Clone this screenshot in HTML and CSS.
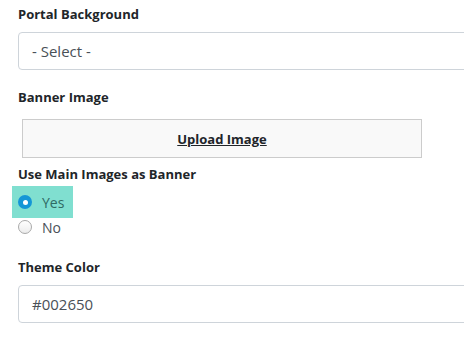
FILE: index.html
```html
<!DOCTYPE html>
<html lang="en">
<head>
  <meta charset="UTF-8" />
  <meta name="viewport" content="width=device-width, initial-scale=1.0"/>
  <title>Portal Settings</title>
  <link rel="stylesheet" href="styles.css">
</head>
<body>

<div class="settings">
  <div class="field">
    <label class="field-label">Portal Background</label>
    <div class="select-box">- Select -</div>
  </div>

  <div class="field field-banner">
    <label class="field-label">Banner Image</label>
    <div class="upload-box"><span class="upload-link">Upload Image</span></div>
  </div>

  <div class="field field-radio">
    <label class="field-label">Use Main Images as Banner</label>
    <div class="radio-row radio-active">
      <span class="radio radio-checked"></span>
      <span class="radio-text">Yes</span>
    </div>
    <div class="radio-row">
      <span class="radio"></span>
      <span class="radio-text">No</span>
    </div>
  </div>

  <div class="field field-theme">
    <label class="field-label">Theme Color</label>
    <div class="text-box">#002650</div>
  </div>
</div>

</body>
</html>
```

FILE: styles.css
```css
* {
  box-sizing: border-box;
  font-family: 'Open Sans', 'Noto Sans', Arial, sans-serif;
}

body {
  margin: 0;
  padding: 0;
  background: #ffffff;
  overflow: hidden;
  color: #212529;
}

.settings {
  padding: 4px 0 0 18px;
  width: 500px;
}

.field-label {
  display: block;
  font-size: 13px;
  font-weight: 700;
  line-height: 20px;
  color: #212529;
  margin-bottom: 8px;
}

.select-box,
.text-box {
  height: 38px;
  width: 470px;
  border: 1px solid #ced4da;
  border-radius: 4px;
  padding: 0 13px;
  font-size: 15px;
  line-height: 36px;
  color: #495057;
}

.field-banner {
  margin-top: 17px;
}

.field-banner .field-label {
  margin-bottom: 12px;
}

.upload-box {
  margin-left: 4px;
  width: 400px;
  height: 39px;
  background: #f9f9f9;
  border: 1px solid #cccccc;
  display: flex;
  align-items: center;
  justify-content: center;
}

.upload-link {
  font-size: 13px;
  font-weight: 700;
  color: #212529;
  text-decoration: underline;
}

.field-radio {
  margin-top: 6px;
}

.field-radio .field-label {
  margin-bottom: 2px;
}

.radio-row {
  display: flex;
  align-items: center;
  gap: 10px;
  height: 18px;
  font-size: 14px;
  color: #495057;
}

.radio-active {
  margin-left: -6px;
  padding-left: 6px;
  width: 61px;
  height: 32px;
  background: #80dfd0;
  color: #2f6a64;
}

.radio {
  width: 14px;
  height: 14px;
  border-radius: 50%;
  border: 1px solid #a9a9a9;
  background: linear-gradient(#ffffff, #ececec);
  display: flex;
  align-items: center;
  justify-content: center;
}

.radio-checked {
  border: none;
  background: #1496d6;
}

.radio-checked::after {
  content: "";
  width: 5px;
  height: 5px;
  border-radius: 50%;
  background: #ffffff;
}

.field-theme {
  margin-top: 21px;
}
```
